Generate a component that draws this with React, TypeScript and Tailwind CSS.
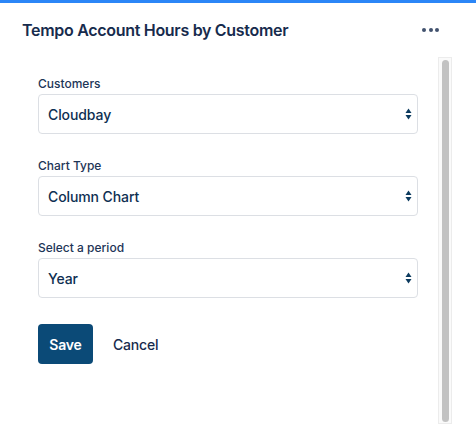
import React from "react";

function Arrows() {
  return (
    <svg width="7" height="12" viewBox="0 0 7 12" className="shrink-0">
      <path d="M3.5 0.5 L6.5 5 L0.5 5 Z" fill="#0b3a5e" />
      <path d="M0.5 7 L6.5 7 L3.5 11.5 Z" fill="#0b3a5e" />
    </svg>
  );
}

function Field({ label, value }: { label: string; value: string }) {
  return (
    <div className="flex flex-col gap-[2px]">
      <div className="text-[12px] leading-[16px] font-medium text-[#1d3557]">{label}</div>
      <div className="h-[40px] w-[380px] rounded-[4px] border border-[#dcdfe4] bg-white flex items-center justify-between pl-[9px] pr-[5px]">
        <span className="text-[14px] font-medium text-[#0e2f52] tracking-[-0.1px]">{value}</span>
        <Arrows />
      </div>
    </div>
  );
}

export default function App() {
  return (
    <div
      className="w-[476px] h-[439px] bg-white overflow-hidden flex flex-col"
      style={{ fontFamily: "Inter, 'Noto Sans', sans-serif" }}
    >
      <div className="h-[3px] bg-[#2b86f7] shrink-0" />
      <div className="h-[54px] shrink-0 flex items-center justify-between pl-[22px] pr-[37px]">
        <div className="text-[16px] font-semibold text-[#172b4d] tracking-[-0.3px]">
          Tempo Account Hours by Customer
        </div>
        <div className="flex gap-[2.5px]">
          <span className="w-[4px] h-[4px] rounded-full bg-[#42526e]" />
          <span className="w-[4px] h-[4px] rounded-full bg-[#42526e]" />
          <span className="w-[4px] h-[4px] rounded-full bg-[#42526e]" />
        </div>
      </div>
      <div className="flex flex-1">
        <div className="w-[438px] pl-[38px] pt-[19px] flex flex-col">
          <div className="flex flex-col gap-[24px]">
            <Field label="Customers" value="Cloudbay" />
            <Field label="Chart Type" value="Column Chart" />
            <Field label="Select a period" value="Year" />
          </div>
          <div className="flex items-center gap-[20px] mt-[26px]">
            <button className="h-[40px] w-[55px] rounded-[4px] bg-[#0b4a77] text-white text-[14px] font-semibold tracking-[-0.2px]">
              Save
            </button>
            <button className="text-[14px] font-medium text-[#172b4d] tracking-[-0.2px]">Cancel</button>
          </div>
        </div>
        <div className="w-[14px] h-[367px] border border-[#ececec] bg-[#fafafa] flex justify-center pt-[2px]">
          <div className="w-[7px] h-[362px] rounded-full bg-[#c2c2c2]" />
        </div>
      </div>
    </div>
  );
}
